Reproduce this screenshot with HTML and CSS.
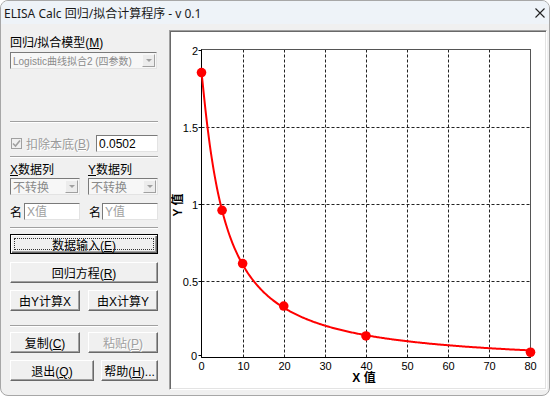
FILE: index.html
```html
<!DOCTYPE html>
<html lang="zh-CN">
<head>
    <meta charset="UTF-8">
    <title>ELISA Calc 回归/拟合计算程序 - v 0.1</title>
    <link rel="stylesheet" href="styles.css">
</head>
<body>
    <div class="window">
        <div class="titlebar">
            <span class="title">ELISA Calc 回归/拟合计算程序 - v 0.1</span>
            <svg class="close" width="10" height="10" viewBox="0 0 10 10"><path d="M0.5 0.5L9.5 9.5M9.5 0.5L0.5 9.5"/></svg>
        </div>
        <div class="main">
            <div class="panel">
                <div class="lbl">回归/拟合模型(<u>M</u>)</div>
                <div class="combo off model"><span>Logistic曲线拟合2 (四参数)</span><i class="drop"></i></div>

                <div class="sep s1"></div>

                <div class="row check-row">
                    <label class="check"><span class="box"><svg width="9" height="9" viewBox="0 0 9 9"><path d="M1 4.5L3.5 7L8 1.5"/></svg></span>扣除本底(<u>B</u>)</label>
                    <input class="edit bg-val" type="text" value="0.0502">
                </div>

                <div class="sep s2"></div>

                <div class="row col-labels">
                    <span class="half"><u>X</u>数据列</span>
                    <span class="half"><u>Y</u>数据列</span>
                </div>
                <div class="row combos">
                    <div class="combo off half"><span>不转换</span><i class="drop"></i></div>
                    <div class="combo off half"><span>不转换</span><i class="drop"></i></div>
                </div>
                <div class="row names">
                    <span class="name">名</span><input class="edit" type="text" placeholder="X值">
                    <span class="name n2">名</span><input class="edit" type="text" placeholder="Y值">
                </div>

                <div class="sep s3"></div>

                <button type="button" class="btn default data-btn">数据输入(<u>E</u>)</button>
                <button type="button" class="btn full eq-btn">回归方程(<u>R</u>)</button>
                <div class="row pair calc">
                    <button type="button" class="btn half">由Y计算X</button>
                    <button type="button" class="btn half">由X计算Y</button>
                </div>

                <div class="sep s4"></div>

                <div class="row pair copy">
                    <button type="button" class="btn half">复制(<u>C</u>)</button>
                    <button type="button" class="btn half" disabled>粘贴(<u>P</u>)</button>
                </div>
                <div class="row pair quit">
                    <button type="button" class="btn exit">退出(<u>Q</u>)</button>
                    <button type="button" class="btn help">帮助(<u>H</u>)...</button>
                </div>
            </div>

            <div class="chart-frame">
                <svg id="chart" width="374" height="356" viewBox="171 32 374 356">
                    <g id="grid" class="grid"></g>
                    <rect class="plot-box" x="201.5" y="49.5" width="329" height="308"/>
                    <path class="axis" d="M201.5 49.5V357.5H530.5"/>
                    <g id="ticks" class="ticks"></g>
                    <path id="curve" class="curve"/>
                    <g id="dots" class="dots"></g>
                    <text class="axis-title" x="364" y="382">X 值</text>
                    <text class="axis-title" transform="translate(182 205) rotate(-90)">Y 值</text>
                </svg>
            </div>
        </div>
    </div>

    <script>
        // 坐标换算: x 0..80, y 0..2
        const x0 = 201.5, x1 = 530.5, y0 = 357.5, y1 = 49.5;
        const px = v => x0 + (x1 - x0) * v / 80;
        const py = v => y0 - (y0 - y1) * v / 2;
        const ns = 'http://www.w3.org/2000/svg';

        function el(name, attrs, parent, text) {
            const e = document.createElementNS(ns, name);
            for (const k in attrs) e.setAttribute(k, attrs[k]);
            if (text !== undefined) e.textContent = text;
            parent.appendChild(e);
            return e;
        }

        const grid = document.getElementById('grid');
        const ticks = document.getElementById('ticks');
        for (let i = 10; i < 80; i += 10) {
            const x = Math.round(px(i)) + 0.5;
            el('path', { d: `M${x} ${y1}V${y0}` }, grid);
        }
        [0.5, 1, 1.5].forEach(v => {
            const y = Math.round(py(v)) + 0.5;
            el('path', { d: `M${x0} ${y}H${x1}` }, grid);
        });
        for (let i = 0; i <= 80; i += 10) {
            const x = i === 80 ? x1 : (i === 0 ? x0 : Math.round(px(i)) + 0.5);
            el('text', { x: x, y: 370, 'text-anchor': 'middle' }, ticks, String(i));
        }
        [[0, '0'], [0.5, '0.5'], [1, '1'], [1.5, '1.5'], [2, '2']].forEach(([v, t]) => {
            const y = v === 0 ? y0 - 2 : Math.round(py(v)) + 0.5;
            el('text', { x: v === 0 ? 197 : 198, y: y + 4, 'text-anchor': 'end' }, ticks, t);
            el('path', { d: `M${x0 - 3} ${y}H${x0}`, class: 'tick' }, ticks);
        });

        // 四参数 Logistic
        const A = 1.85, B = 1.1, C = 5.56, D = -0.05;
        const f = x => D + (A - D) / (1 + Math.pow(x / C, B));
        let d = '';
        for (let x = 0; x <= 80; x += 0.25) {
            d += (d ? 'L' : 'M') + px(x).toFixed(2) + ' ' + py(f(x)).toFixed(2);
        }
        document.getElementById('curve').setAttribute('d', d);

        const points = [[0, 1.85], [5, 0.956], [10, 0.61], [20, 0.334], [40, 0.14], [80, 0.034]];
        const dots = document.getElementById('dots');
        points.forEach(([x, y]) => el('circle', { cx: px(x), cy: py(y), r: 4.8 }, dots));
    </script>
</body>
</html>
```

FILE: styles.css
```css
body { margin: 0; background: #fff; font-family: "Liberation Sans", "Noto Sans CJK SC", sans-serif; font-size: 12px; color: #000; }
.window { width: 550px; height: 396px; box-sizing: border-box; border: 1px solid #a7a7a7; border-radius: 8px; background: #f0f0f0; overflow: hidden; }

.titlebar { height: 23px; background: #eef3f8; display: flex; align-items: center; justify-content: space-between; padding: 0 4px 0 3px; }
.title { font-family: "Noto Sans", "Noto Sans CJK SC", sans-serif; font-size: 12px; color: #1a1a1a; }
.close { margin-right: 0; stroke: #222; stroke-width: 1.1; fill: none; }

.main { display: flex; gap: 11px; padding: 6px 0 0 9px; }
.panel { width: 148px; display: flex; flex-direction: column; }

.lbl { height: 14px; line-height: 14px; margin-top: 6px; }
u { text-decoration: underline; text-underline-offset: 1px; }

.row { display: flex; align-items: center; }
.half { width: 70px; }
.row .half + .half { margin-left: 8px; }

.edit, .combo {
    box-sizing: border-box;
    height: 17px;
    border: 1px solid;
    border-color: #7a7a7a #e3e3e3 #e3e3e3 #7a7a7a;
    background: #fff;
    font-family: "Liberation Sans", "Noto Sans CJK SC", sans-serif;
    font-size: 12px;
    padding: 0 2px;
    margin: 0;
    outline: none;
}
.edit::placeholder { color: #a0a0a0; }

.combo { display: flex; align-items: center; justify-content: space-between; padding: 0 1px 0 2px; }
.combo.off { background: #f7f7f7; color: #8a8a8a; }
.combo span { white-space: nowrap; overflow: hidden; }
.model { margin-top: 2px; width: 147px; font-size: 10px; }
.drop { flex: none; width: 13px; height: 13px; box-sizing: border-box; border: 1px solid; border-color: #f7f7f7 #a0a0a0 #a0a0a0 #f7f7f7; background: #ececec; position: relative; }
.drop::after { content: ""; position: absolute; left: 3px; top: 4px; border-left: 3px solid transparent; border-right: 3px solid transparent; border-top: 3px solid #a0a0a0; }

.sep { height: 0; border-top: 1px solid #a0a0a0; border-bottom: 1px solid #fff; }
.s1 { margin-top: 52px; }
.s2 { margin-top: 4px; }
.s3 { margin-top: 7px; }
.s4 { margin-top: 14px; }

.check-row { margin-top: 12px; height: 17px; }
.check { display: flex; align-items: center; color: #9a9a9a; width: 85px; padding-left: 1px; text-shadow: 1px 1px 0 #fff; }
.box { width: 11px; height: 11px; box-sizing: border-box; border: 1px solid #a0a0a0; background: #f0f0f0; margin-right: 4px; display: flex; align-items: center; justify-content: center; }
.box svg { fill: none; stroke: #a0a0a0; stroke-width: 1.6; }
.bg-val { width: 62px; }

.col-labels { margin-top: 5px; height: 14px; line-height: 14px; }
.combos { margin-top: 1px; }
.names { margin-top: 8px; }
.names .edit { width: 56px; }
.name { width: 14px; }
.n2 { width: 13px; margin-left: 9px; }

.btn {
    box-sizing: border-box;
    height: 21px;
    padding: 0;
    border: 1px solid;
    border-color: #fff #696969 #696969 #fff;
    box-shadow: inset -1px -1px 0 #a0a0a0;
    background: #f0f0f0;
    font-family: "Liberation Sans", "Noto Sans CJK SC", sans-serif;
    font-size: 12px;
    color: #000;
}
.btn:disabled { color: #a0a0a0; text-shadow: 1px 1px 0 #fff; }
.default { position: relative; height: 20px; margin-top: 5px; border: 1px solid #000; box-shadow: inset 1px 1px 0 #fff, inset -1px -1px 0 #696969, inset -2px -2px 0 #a0a0a0; }
.default::after { content: ""; position: absolute; left: 3px; top: 3px; right: 3px; bottom: 3px; border: 1px dotted #333; }
.full, .default { width: 148px; }
.eq-btn { margin-top: 8px; }
.calc { margin-top: 7px; }
.copy { margin-top: 5px; }
.quit { margin-top: 7px; }
.exit { width: 84px; }
.help { width: 57px; margin-left: 7px; }

.chart-frame { width: 378px; height: 360px; box-sizing: border-box; border: 1px solid; border-color: #a0a0a0 #fff #fff #a0a0a0; box-shadow: inset 1px 1px 0 #696969, inset -1px -1px 0 #e3e3e3; background: #fff; padding: 1px; }
#chart { display: block; }
.grid path { stroke: #222; stroke-width: 1; stroke-dasharray: 3 2; fill: none; }
.plot-box { fill: none; stroke: #555; stroke-width: 1; }
.axis { fill: none; stroke: #000; stroke-width: 1; }
.tick { stroke: #000; stroke-width: 1; }
.ticks text { font-family: "Liberation Sans", sans-serif; font-size: 11px; fill: #000; }
.curve { fill: none; stroke: #f00; stroke-width: 2; }
.dots circle { fill: #f00; }
.axis-title { font-family: "Liberation Sans", "Noto Sans CJK SC", sans-serif; font-size: 12px; font-weight: bold; text-anchor: middle; fill: #000; }
```
